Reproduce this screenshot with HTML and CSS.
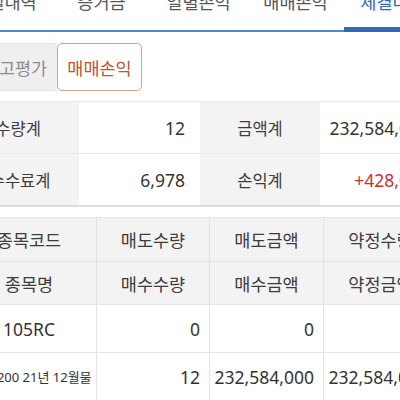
FILE: index.html
```html
<!DOCTYPE html>
<html lang="ko">
<head>
<meta charset="utf-8">
<link rel="stylesheet" href="styles.css">
</head>
<body>
<div class="page">
  <nav class="tabs">
    <div class="tab">당일내역</div>
    <div class="tab">증거금</div>
    <div class="tab">일별손익</div>
    <div class="tab">매매손익</div>
    <div class="tab active">체결내역</div>
  </nav>

  <div class="btns">
    <div class="btn btn-off">잔고평가</div>
    <div class="btn btn-on">매매손익</div>
  </div>

  <div class="summary">
    <div class="s-label s-first">총수량계</div>
    <div class="s-val">12</div>
    <div class="s-label">금액계</div>
    <div class="s-val">232,584,000</div>
    <div class="s-label s-first s-last">총수수료계</div>
    <div class="s-val s-last">6,978</div>
    <div class="s-label s-last">손익계</div>
    <div class="s-val s-last red">+428,000</div>
  </div>

  <div class="grid">
    <div class="h h1">종목코드</div>
    <div class="h">매도수량</div>
    <div class="h">매도금액</div>
    <div class="h">약정수량</div>
    <div class="h h1">종목명</div>
    <div class="h">매수수량</div>
    <div class="h">매수금액</div>
    <div class="h">약정금액</div>

    <div class="d code">105RC</div>
    <div class="d num">0</div>
    <div class="d num">0</div>
    <div class="d num">0</div>
    <div class="d name">코스피200 21년 12월물</div>
    <div class="d num">12</div>
    <div class="d num">232,584,000</div>
    <div class="d num">232,584,000</div>
  </div>
</div>
</body>
</html>
```

FILE: styles.css
```css
html, body {
  margin: 0;
  padding: 0;
  background: #ffffff;
}

body {
  width: 400px;
  height: 400px;
  overflow: hidden;
  font-family: "Noto Sans", "Noto Sans CJK KR", sans-serif;
  font-size: 17.5px;
  color: #333333;
}

.page {
  width: 400px;
}

/* top tab bar */
.tabs {
  display: flex;
  margin-top: -10px;
  margin-left: -44px;
  width: 500px;
  border-bottom: 2px solid #5088c7;
}

.tab {
  flex: 0 0 97px;
  text-align: center;
  line-height: 24px;
  padding-bottom: 16px;
  color: #555555;
  white-space: nowrap;
}

.tab.active {
  color: #2d6ab3;
  padding-bottom: 13px;
  border-bottom: 5px solid #2f6cb4;
  margin-bottom: -2px;
}

/* segmented buttons */
.btns {
  display: flex;
  margin: 11px 0 0 -28px;
}

.btn {
  width: 85px;
  height: 48px;
  box-sizing: border-box;
  display: flex;
  align-items: center;
  justify-content: center;
  white-space: nowrap;
}

.btn-off {
  background: #efefef;
  border: 1px solid #e2e2e2;
  border-right: none;
  border-radius: 4px 0 0 4px;
  color: #8c8c8c;
}

.btn-on {
  background: #ffffff;
  border: 1px solid #d8a283;
  border-radius: 5px;
  color: #c0542a;
}

/* summary table */
.summary {
  display: grid;
  grid-template-columns: 125px 121px 120px 124px;
  margin: 10px 0 0 -46px;
  border-top: 1px solid #e6e6e6;
  border-bottom: 2px solid #dddddd;
}

.summary > div {
  height: 52px;
  display: flex;
  align-items: center;
  box-sizing: border-box;
  border-bottom: 1px solid #e9e9e9;
  white-space: nowrap;
}

.summary > .s-last {
  border-bottom: none;
  height: 51px;
}

.s-label {
  background: #f3f3f3;
  justify-content: center;
  color: #3d3d3d;
  font-size: 16.5px;
}

.s-first {
  padding-right: 12px;
}

.s-first.s-last {
  padding-right: 8px;
}

.s-val {
  background: #ffffff;
  justify-content: flex-end;
  padding-right: 15px;
}

.red {
  color: #c9302c;
}

/* detail grid */
.grid {
  display: grid;
  grid-template-columns: 157px 113px 114px 114px;
  grid-template-rows: 44px 43px 48px 48px;
  margin: 10px 0 0 -60px;
  border-top: 1px solid #e3e3e3;
}

.grid > div {
  display: flex;
  align-items: center;
  box-sizing: border-box;
  border-right: 1px solid #e3e3e3;
  border-bottom: 1px solid #e6e6e6;
  white-space: nowrap;
}

.h {
  background: #f3f3f3;
  justify-content: center;
  color: #3d3d3d;
}

.h1 {
  padding-left: 22px;
}

.d {
  background: #ffffff;
}

.num {
  justify-content: flex-end;
  padding-right: 9px;
}

.code {
  padding-left: 63px;
}

.name {
  padding-left: 21px;
  font-size: 13px;
}
```
